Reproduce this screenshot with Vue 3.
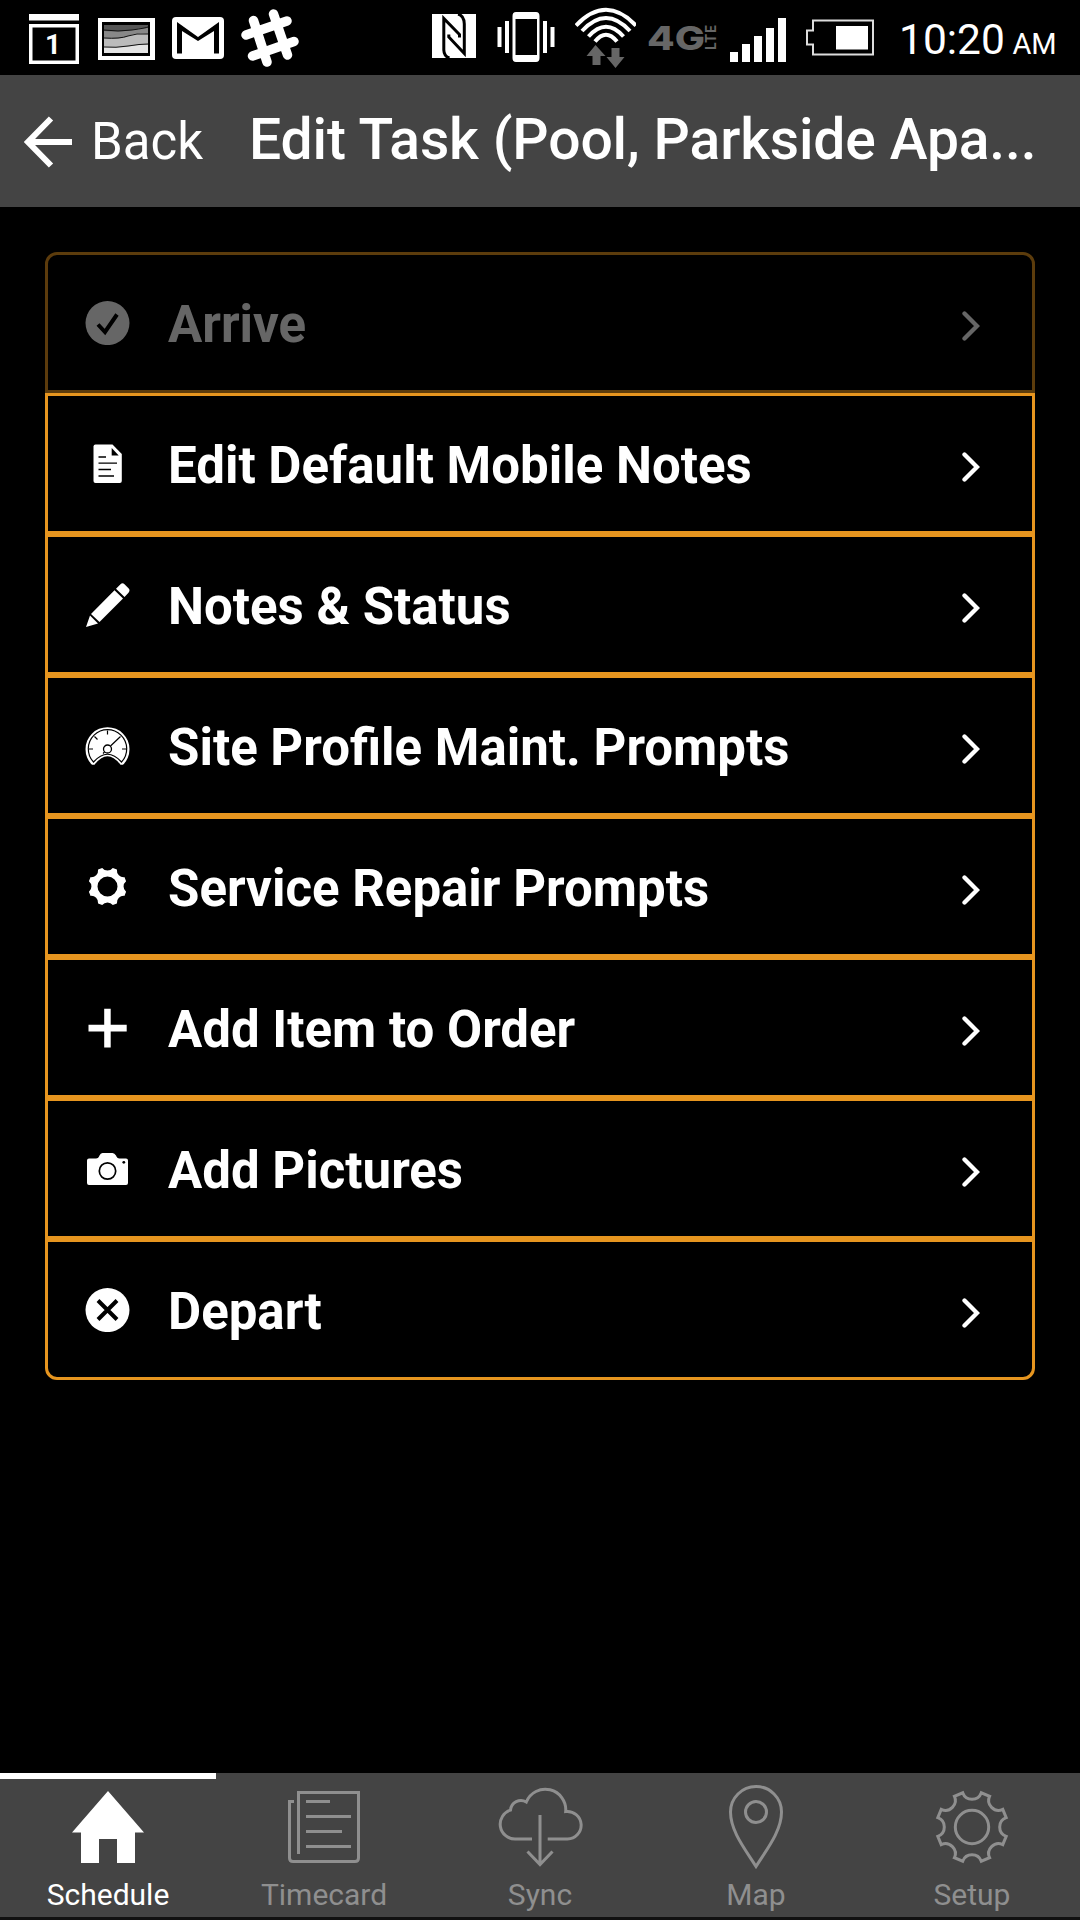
<template>
  <div class="screen">
    <div class="status-bar">
      <svg width="52" height="75" viewBox="29 0 52 75">
        <path d="M29 14h50v6.500H29zM29 24h50v40H29zM32.500 27.500V60.500h43V27.500z" fill="#fff" fill-rule="evenodd" />
        <text x="53" y="54" class="calendar-day">1</text>
      </svg>
      <svg width="57" height="75" viewBox="98 0 57 75">
        <path d="M98 18h57v42H98zM102 22v34h48V22z" fill="#fff" fill-rule="evenodd" />
        <path d="M104 25h44v28h-44z" fill="#e4e4e4" />
        <path d="M104 25h44v20q-8-1-16 1t-28 1z" fill="#bbb" />
        <path d="M104 25h44v9q-12-2-20 2t-24 2z" fill="#888" />
        <path d="M104 25h44v3q-8 0-16 2t-28 1z" fill="#555" />
        <path d="M104 47q12 1 24-1t20-2M104 38q16 1 24-2t20-2M104 30q14 2 28 0t16-3" fill="none" stroke="#111" />
      </svg>
      <svg width="52" height="75" viewBox="172 0 52 75">
        <rect x="172" y="17" width="52" height="42" rx="4" fill="#fff" />
        <path d="M177 53.500V22l21 15 21-15v31.500h-5V31L198 41 182 31v22.500z" fill="#000" />
      </svg>
      <svg width="58" height="75" viewBox="241 0 58 75">
        <path d="M253.500 20.500L267 62M273.500 14L287.500 55M246 35L287 21M252.500 56L294 41.500" stroke="#fff" stroke-width="9.500" stroke-linecap="round" />
      </svg>

      <div class="status-right">
        <svg width="53" height="75" viewBox="432 0 53 75">
          <path d="M432 14h44v44h-44z" fill="#fff" />
          <path d="M459.500 37.500V34.500L443.800 18.500V50Q444 56.500 449.500 58M448.800 34.500V37L464.300 53.500V24Q464 15.500 458 14" fill="none" stroke="#000" stroke-width="3" />
        </svg>
        <svg width="66" height="75" viewBox="497 0 66 75">
          <path d="M516 12h20q3.500 0 3.500 4v42q0 4-3.500 4h-20q-3.500 0-3.500-4V16q0-4 3.500-4zM515.500 19v36H537V19z" fill="#fff" fill-rule="evenodd" />
          <path d="M499.500 27v20M507 21v32M545 21v32M552.500 27v20" stroke="#fff" stroke-width="4" />
        </svg>
        <svg width="61" height="75" viewBox="575 0 61 75">
          <g fill="none" stroke="#fff" stroke-width="4">
            <path d="M576 25.500Q606 -6 636 25.500" />
            <path d="M582 31Q606 5 630 31" />
            <path d="M588.500 36.500Q606 17 623.500 36.500" />
            <path d="M595 41.500Q606 28 617 41.500" />
          </g>
          <path d="M595.500 45l10 11h-5v9h-8v-9h-6zM611.500 48h8v9h5l-9 11-9-11h5z" fill="#666" />
        </svg>
        <svg width="70" height="75" viewBox="648 0 70 75">
          <text x="647" y="49.500" class="network" textLength="58" lengthAdjust="spacingAndGlyphs">4G</text>
          <text transform="translate(716 50) rotate(-90)" class="network-lte" textLength="25" lengthAdjust="spacing">LTE</text>
        </svg>
        <svg width="64" height="75" viewBox="730 0 64 75">
          <path d="M730 52h8v10h-8zM742 44h8v18h-8zM754 36h8v26h-8zM766 28h8v34h-8zM778 18h8v44h-8z" fill="#fff" />
        </svg>
        <svg width="69" height="75" viewBox="806 0 69 75">
          <path d="M813 20.500h60v34h-60v-10h-6v-14h6z" fill="none" stroke="#ddd" stroke-width="2" />
          <path d="M836 26h32v23.500h-32z" fill="#fff" />
        </svg>
        <div class="clock">10:20 <span>AM</span></div>
      </div>
    </div>

    <header class="nav-bar">
      <button class="back">
        <svg width="50" height="52" viewBox="0 0 50 52">
          <path d="M27 2.500L4 26l23 23.500M4 26h44" fill="none" stroke="#fff" stroke-width="6" />
        </svg>
        <span>Back</span>
      </button>
      <h1>Edit Task (Pool, Parkside Apa...</h1>
    </header>

    <main class="content">
      <ul class="task-list">
        <li v-for="item in items" :key="item.icon" :class="{ disabled: item.disabled }">
          <svg class="item-icon" viewBox="-22.500 -22.500 45 45">
            <template v-if="item.icon === 'check'">
              <circle cy=".6" r="22" />
              <path class="cut" d="M-9.500 2l7 7.500L9.500-8" stroke-width="4" />
            </template>
            <template v-else-if="item.icon === 'document'">
              <path d="M-12-19H5L14.300-9.500V17.500q0 2-2 2H-12q-2 0-2-2V-17q0-2 2-2z" />
              <path d="M4.200-15.500v7.500h7z" fill="#000" />
              <path class="cut" d="M-9-6.500h7.500M-9-.3H9.500M-9 6H3.500M-9 12.500H6.500" stroke-width="1.300" />
            </template>
            <template v-else-if="item.icon === 'pencil'">
              <path d="M-21.500 22.500l4-11.500 8 8zM-16.500 9.500L7-14.200l8.500 8.200L-8 17.500zM8.500-15.800l4.500-4.500q2-2 4 0l4 4q2 2 0 4.500l-4 4.300z" />
            </template>
            <template v-else-if="item.icon === 'gauge'">
              <path d="M-15.500 19.300A22 22 0 1 1 15.500 19.300H13Q0 2-13 19.300z" />
              <path class="cut" d="M-14 16.500A19.200 19.200 0 1 1 14 16.500Q0 1-14 16.500z" stroke-width="1.200" />
              <path class="cut" d="M0-15v4M-13-9l3 3M13-9L3 .5M-18.500 3.500h4M18.500 3.500h-4M-3 6.500l-1.500 1.500" stroke-width="1.200" />
              <circle class="cut" cy="3.500" r="4" stroke-width="1.300" />
            </template>
            <template v-else-if="item.icon === 'gear'">
              <path :d="smallGear" fill-rule="evenodd" />
            </template>
            <template v-else-if="item.icon === 'plus'">
              <path d="M-3.300-18.700h6.500v16h16v6.600h-16v16h-6.500v-16h-15.700v-6.600h15.700z" />
            </template>
            <template v-else-if="item.icon === 'camera'">
              <path d="M-18.500-10H-11.500Q-9-10-8-13-7-15.500-5-15.500H5Q7-15.500 8.500-13 9.500-10 12-10H18.500q2 0 2 2V14.500q0 2-2 2h-37q-2 0-2-2V-8q0-2 2-2z" />
              <circle class="cut" cy="2.500" r="8.200" stroke-width="1.700" />
              <circle cx="16.300" cy="-6.200" r="1.400" fill="#000" />
            </template>
            <template v-else>
              <circle cy=".6" r="22" />
              <path class="cut" d="M-9.500-9l19 19M9.500-9l-19 19" stroke-width="4" />
            </template>
          </svg>
          <span class="item-label">{{ item.label }}</span>
          <svg class="chevron" viewBox="0 0 20 34">
            <path d="M4.500 4.500L17 17 4.500 29.500" />
          </svg>
        </li>
      </ul>
    </main>

    <nav class="tab-bar">
      <a v-for="tab in tabs" :key="tab.label" :class="{ active: tab.active }">
        <svg width="90" height="90" viewBox="-45 -45 90 90">
          <path v-for="d in tab.paths" :key="d" :d="d" />
          <circle v-if="tab.circle" :cy="tab.circle.cy" :r="tab.circle.r" />
        </svg>
        <span>{{ tab.label }}</span>
      </a>
    </nav>
  </div>
</template>

<script setup>
// Gear outline with 8 teeth: x/y is the corner next to the top notch, r the notch radius
function gearPath(x, y, r) {
  let d = ''
  for (let i = 0; i < 8; i++) {
    const a = (i * Math.PI) / 4
    const point = (px) =>
      `${(px * Math.cos(a) - y * Math.sin(a)).toFixed(2)} ${(px * Math.sin(a) + y * Math.cos(a)).toFixed(2)}`
    d += `${i ? 'L' : 'M'}${point(-x)}A${r} ${r} 0 0 0 ${point(x)}`
  }
  return d + 'z'
}

const smallGear = gearPath(5.3, -18.6, 6.8) + 'M10 0A10 10 0 1 0-10 0A10 10 0 1 0 10 0z'

const items = [
  { icon: 'check', label: 'Arrive', disabled: true },
  { icon: 'document', label: 'Edit Default Mobile Notes' },
  { icon: 'pencil', label: 'Notes & Status' },
  { icon: 'gauge', label: 'Site Profile Maint. Prompts' },
  { icon: 'gear', label: 'Service Repair Prompts' },
  { icon: 'plus', label: 'Add Item to Order' },
  { icon: 'camera', label: 'Add Pictures' },
  { icon: 'close', label: 'Depart' },
]

const tabs = [
  {
    label: 'Schedule',
    active: true,
    paths: ['M0-36L36 5.500H27V36H9V12H-9V36H-27V5.500H-36z'],
  },
  {
    label: 'Timecard',
    paths: [
      'M-25.500 27V-34.500H34.500V31q0 3.500-3.500 3.500H-31q-3.500 0-3.500-3.500V-25.500H-30',
      'M-18-25.500H6M-18-10.500H27M-18 4.500H18M-18 19.500H27',
    ],
  },
  {
    label: 'Sync',
    paths: [
      'M-8 12H-25A14.800 14.800 0 0 1-29.500-16.900A10.500 10.500 0 0 1-13.700-25A20.500 20.500 0 0 1 25.700-15.500A13.800 13.800 0 1 1 27.500 12H7.700',
      'M0-12V37.500M-12.500 24.500L0 37.500 12.500 24.500',
    ],
  },
  {
    label: 'Map',
    paths: ['M0 39.500C-11 22-25.500 4-25.500-15A25.500 25.500 0 0 1 25.500-15C25.500 4 11 22 0 39.500z'],
    circle: { cy: -15, r: 10.5 },
  },
  {
    label: 'Setup',
    paths: [gearPath(9.3, -34.2, 9.9)],
    circle: { cy: 0, r: 16.7 },
  },
]
</script>

<style>
body {
  margin: 0;
  background: #000;
}
</style>

<style scoped>
.screen {
  width: 1080px;
  height: 1920px;
  display: flex;
  flex-direction: column;
  background: #000;
  color: #fff;
  font-family: Roboto, "Liberation Sans", sans-serif;
  overflow: hidden;
}

svg {
  display: block;
  flex-shrink: 0;
}

.status-bar {
  height: 75px;
  display: flex;
  gap: 17px;
  padding: 0 25px 0 29px;
  flex-shrink: 0;
}

.status-right {
  display: flex;
  gap: 12px;
  margin-left: auto;
}

.calendar-day {
  font-size: 28px;
  font-weight: 700;
  fill: #fff;
  text-anchor: middle;
}

.network {
  font-family: Inter, sans-serif;
  font-size: 33px;
  font-weight: 800;
  fill: #666;
}

.network-lte {
  font-size: 14px;
  font-weight: 700;
  fill: #666;
}

.clock {
  width: 156px;
  margin-left: 12px;
  padding-top: 2px;
  line-height: 75px;
  font-size: 42.5px;
  white-space: nowrap;
  word-spacing: -3px;
  box-sizing: border-box;
}

.clock span {
  font-size: 29px;
}

.nav-bar {
  height: 132px;
  display: flex;
  align-items: center;
  flex-shrink: 0;
  background: #444;
}

.back {
  width: 249px;
  display: flex;
  align-items: center;
  gap: 17px;
  padding: 1px 0 0 24px;
  box-sizing: border-box;
  border: 0;
  background: none;
  color: inherit;
  font: 400 51px/60px Roboto, "Liberation Sans", sans-serif;
}

h1 {
  margin: 0;
  padding-bottom: 3px;
  font-size: 57px;
  font-weight: 500;
  line-height: 67px;
  letter-spacing: -0.14px;
  white-space: nowrap;
}

.content {
  flex: 1;
  padding: 45px;
}

.task-list {
  margin: 0;
  padding: 0;
  list-style: none;
}

.task-list li {
  height: 141px;
  display: flex;
  align-items: center;
  padding: 0 52px 0 37px;
  box-sizing: border-box;
  border: 3px solid #e6951f;
}

.task-list li:first-child {
  border-radius: 12px 12px 0 0;
}

.task-list li:last-child {
  border-radius: 0 0 12px 12px;
}

.task-list li.disabled {
  opacity: 0.4;
}

.item-icon {
  width: 45px;
  height: 45px;
  fill: #fff;
}

.item-icon .cut {
  fill: none;
  stroke: #000;
}

.item-label {
  flex: 1;
  margin-left: 38px;
  padding-top: 5px;
  font-size: 51px;
  font-weight: 700;
  line-height: 60px;
  white-space: nowrap;
}

.chevron {
  width: 20px;
  height: 34px;
  padding-top: 7px;
  fill: none;
  stroke: #fff;
  stroke-width: 4.3;
  stroke-linecap: round;
}

.tab-bar {
  height: 144px;
  display: flex;
  flex-shrink: 0;
  background: #444;
  border-bottom: 3px solid #111;
}

.tab-bar a {
  width: 216px;
  display: flex;
  flex-direction: column;
  align-items: center;
  padding-top: 3px;
  box-sizing: border-box;
  border-top: 6px solid transparent;
  color: #8f8f8f;
}

.tab-bar a.active {
  border-top-color: #fff;
  color: #fff;
}

.tab-bar svg {
  fill: none;
  stroke: currentColor;
  stroke-width: 3;
}

.tab-bar .active svg {
  fill: currentColor;
  stroke: none;
}

.tab-bar span {
  margin-top: 5px;
  font-size: 30px;
  line-height: 35px;
}
</style>
